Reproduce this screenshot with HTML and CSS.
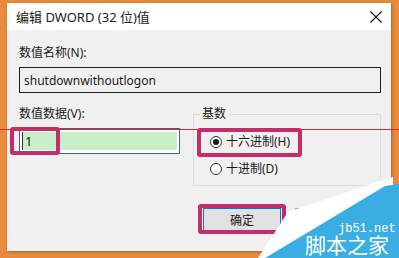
FILE: index.html
```html
<!DOCTYPE html>
<html lang="zh-CN">
<head>
  <meta charset="UTF-8" />
  <title>编辑 DWORD (32 位)值</title>
  <link rel="stylesheet" href="styles.css">
</head>
<body>
  <div class="dialog">
    <div class="titlebar">
      <span class="caption">编辑 DWORD (32 位)值</span>
      <svg class="close" width="12" height="12" viewBox="0 0 12 12">
        <path d="M0.5 0.5 L11.5 11.5 M11.5 0.5 L0.5 11.5" stroke="#111" stroke-width="1.1" fill="none"/>
      </svg>
    </div>

    <div class="content">
      <div class="label">数值名称(N):</div>
      <div class="field name-field">shutdownwithoutlogon</div>

      <div class="row">
        <div class="col-data">
          <div class="label">数值数据(V):</div>
          <div class="field data-field">
            <span class="selected">1</span>
          </div>
        </div>

        <fieldset class="base-group">
          <legend>基数</legend>
          <div class="radio">
            <span class="dot checked"></span>
            <span>十六进制(H)</span>
          </div>
          <div class="radio">
            <span class="dot"></span>
            <span>十进制(D)</span>
          </div>
        </fieldset>
      </div>

      <div class="buttons">
        <button class="btn default">确定</button>
        <button class="btn">取消</button>
      </div>
    </div>
  </div>

  <!-- annotation overlays -->
  <div class="guide-line"></div>
  <div class="mark mark-value"></div>
  <div class="mark mark-hex"></div>
  <div class="mark mark-ok"></div>

  <svg class="watermark" width="144" height="88" viewBox="0 0 144 88">
    <polygon points="3,88 33,42 138,7 138,88" fill="#ffffff"/>
    <polygon points="10,88 130,16 144,14 144,88" fill="#3aaee3"/>
    <text x="83" y="62" class="wm-small">jb51.net</text>
    <text x="50" y="83" class="wm-big">脚本之家</text>
  </svg>
</body>
</html>
```

FILE: styles.css
```css
:root {
  --laranja: #e88b3c;
  --painel: #f0f0f0;
  --marca: #c42e68;
}

* {
  box-sizing: border-box;
  margin: 0;
  padding: 0;
}

body {
  width: 399px;
  height: 258px;
  overflow: hidden;
  position: relative;
  background: var(--laranja);
  font-family: "Noto Sans", "Noto Sans CJK SC", sans-serif;
  font-size: 12px;
  color: #1a1a1a;
}

.dialog {
  margin: 3px 0 0 7px;
  width: 384px;
  height: 248px;
  background: var(--painel);
  box-shadow: 1px 1px 3px rgba(0,0,0,0.3);
  display: flex;
  flex-direction: column;
}

.titlebar {
  height: 27px;
  background: #fff;
  display: flex;
  align-items: center;
  justify-content: space-between;
  padding: 0 9px 0 9px;
}

.caption {
  font-size: 13px;
  line-height: 16px;
}

.content {
  padding: 16px 10px 0 12px;
}

.label {
  line-height: 14px;
  height: 14px;
}

.field {
  margin-top: 7px;
  height: 26px;
  display: flex;
  align-items: center;
}

.name-field {
  width: 362px;
  border: 1px solid #1e1e1e;
  background: var(--painel);
  padding-left: 4px;
  font-size: 12px;
}

.row {
  display: flex;
  margin-top: 14px;
  height: 80px;
}

.col-data {
  width: 174px;
}

.data-field {
  width: 161px;
  border: 1px solid #4a6078;
  background: #fff;
  padding: 2px;
}

.selected {
  flex: 1;
  height: 18px;
  background: #c8efca;
  border-left: 1px solid #333;
  padding-left: 2px;
  font-size: 13px;
  line-height: 18px;
}

.base-group {
  width: 188px;
  height: 79px;
  border: 1px solid #dcdcdc;
  padding: 14px 0 0 16px;
}

.base-group legend {
  margin-left: -10px;
  padding: 0 2px;
  line-height: 14px;
}

.radio {
  display: flex;
  align-items: center;
  gap: 4px;
  height: 14px;
  line-height: 14px;
  margin-bottom: 13px;
}

.dot {
  width: 12px;
  height: 12px;
  border: 1px solid #333;
  border-radius: 50%;
  background: #fff;
  display: flex;
  align-items: center;
  justify-content: center;
}

.dot.checked::after {
  content: '';
  width: 6px;
  height: 6px;
  border-radius: 50%;
  background: #1a1a1a;
}

.buttons {
  display: flex;
  gap: 14px;
  margin-top: 21px;
  padding-left: 184px;
}

.btn {
  width: 78px;
  height: 23px;
  background: #e1e1e1;
  border: 1px solid #adadad;
  font-family: "Noto Sans CJK SC", sans-serif;
  font-size: 12px;
  color: #1a1a1a;
}

.btn.default {
  border-color: #0078d7;
}

.guide-line {
  position: absolute;
  left: 0;
  top: 129px;
  width: 399px;
  height: 1px;
  background: #e0242c;
}

.mark {
  position: absolute;
  border: 4px solid var(--marca);
  border-radius: 3px;
}

.mark-value {
  left: 10px;
  top: 127px;
  width: 50px;
  height: 28px;
}

.mark-hex {
  left: 197px;
  top: 128px;
  width: 105px;
  height: 29px;
}

.mark-ok {
  left: 198px;
  top: 204px;
  width: 88px;
  height: 30px;
}

.watermark {
  position: absolute;
  left: 255px;
  top: 170px;
}

.wm-small {
  font-family: "Liberation Mono", monospace;
  font-size: 12px;
  fill: #fff;
}

.wm-big {
  font-family: "Noto Sans CJK SC", sans-serif;
  font-size: 21px;
  fill: #fff;
}
```
